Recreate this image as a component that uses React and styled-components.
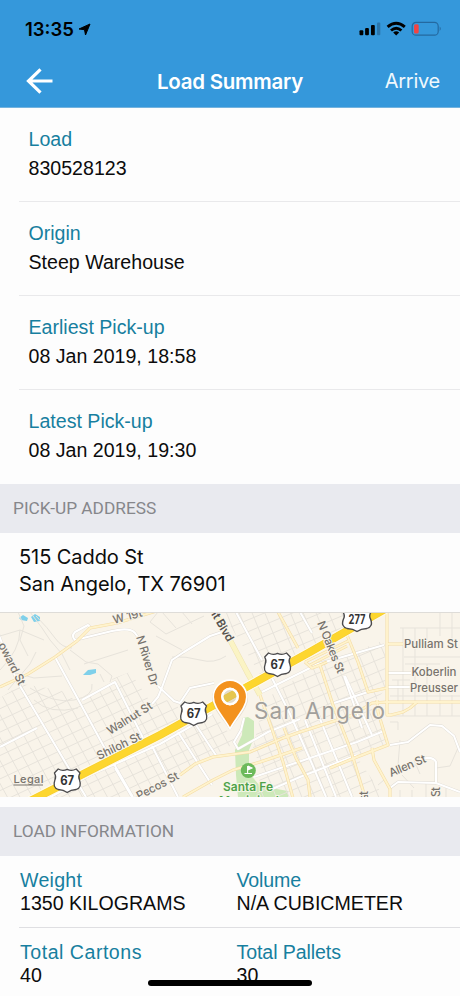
import React from "react";
import styled, { createGlobalStyle } from "styled-components";

const stops = [
  { label: "Load", value: "830528123" },
  { label: "Origin", value: "Steep Warehouse" },
  { label: "Earliest Pick-up", value: "08 Jan 2019, 18:58" },
  { label: "Latest Pick-up", value: "08 Jan 2019, 19:30" },
];

const loadInfo = [
  [
    { label: "Weight", value: "1350 KILOGRAMS", spacing: "0.25px" },
    { label: "Volume", value: "N/A CUBICMETER", spacing: "-0.15px" },
  ],
  [
    { label: "Total Cartons", value: "40", spacing: "0.5px" },
    { label: "Total Pallets", value: "30", spacing: "-0.1px" },
  ],
];

// parallel lines, count of them, each moved by (stepX, stepY)
const hatch = (x, y, dx, dy, stepX, stepY, count) =>
  Array.from(
    { length: count },
    (_, i) => `M${x + i * stepX} ${y + i * stepY}l${dx} ${dy}`
  ).join("");

const westGrid =
  hatch(-10, 690, 260, -122, 0, 11.7, 22) + hatch(-80, 660, 82, 150, 12.5, 0, 26);
const cityGrid =
  hatch(200, 640, 210, -88, 0, 11.8, 24) + hatch(170, 600, 86, 210, 12.8, 0, 20);

// small streets outside the regular blocks
const smallStreets = [
  "M18 612L24 626L20 640L28 656M30 612L42 628L50 640L62 654L70 670M0 636L20 630L44 640M8 690L30 664L36 652",
  "M36 616Q48 628 55 638T72 648M30 688Q54 704 74 700T92 684M70 650L86 662L98 664L112 676L110 682M84 664L128 650",
  "M34 700Q50 715 78 708M0 670Q20 650 20 630M12 672L34 678L62 676M100 674L104 682",
  "M172 657Q186 656 200 660T226 656M150 622L166 634L204 616M156 636L182 650M150 622L158 612M162 612L176 628M182 612L192 624",
  "M400 628H460M404 657H460M405 664H440M392 680H410M390 696H460M390 716H460M403 628V716M415 628V716M427 628V640M427 664V716M440 612V636M440 690V716M452 612V640M452 695V716M398 680V702",
  "M390 722H398V730M394 770L420 764M402 775L414 788M414 760L420 774M400 740L398 765M436 768L450 766L458 748",
  "M378 785L384 780M400 790V797M412 790V797M426 783V797M446 786V797",
];

const whiteRoads = [
  "M-4 628L17 681L67 765L86 797",
  "M55 657L103 745L133 797",
  "M82 700L115 682L143 738",
  "M0 747L37 728",
  "M90 627L88 625L75 632Q71 636 75 640L112 631Q130 627 135 633L140 640",
  "M152 704L158 697L161 690M158 686L174 701L180 703L190 688L214 683",
  "M161 690L172 660L184 652L210 636L222 632",
  "M40 803L90 775L122 761L160 744L212 714",
  "M115 768L132 797M152 746L178 797M178 732L212 785M196 725L217 757",
  "M236 612L262 660",
  "M272 678L290 714L312 764L326 797",
  "M262 692L318 664L384 645",
  "M345 676L372 735M334 703L368 692",
  "M254 777L310 758L357 742L384 731",
  "M270 790L300 777L357 755M305 720L336 797M318 714L352 797",
  "M300 612L312 633M344 676L362 728",
  "M387 673H411M387 687H410",
  "M390 745L408 742L430 725L442 726L454 736L460 752",
  "M390 788L398 782L436 783L460 792M436 783V762Q434 757 425 758",
  "M244 718L241 730L234 742L238 749L268 732L300 719",
];

const yellowRoads = [
  "M0 687L28 674L55 657L77 641L90 628L117 623L160 610",
  "M180 775L195 764L213 757L250 752L283 738L300 732L353 715L372 703L387 702H460",
  "M183 797L213 780L233 770L260 762L302 748",
  "M278 612L298 648M305 662L312 668L320 665L333 705L350 748L365 797",
  "M305 662L350 640M310 665L347 646M320 665L327 662",
  "M387 612V715H391L403 712L410 708L417 702M387 644H403",
  "M347 635L358 662L368 692L387 688",
  "M377 700L378 712L388 745L357 757L330 768",
  "M372 748L374 760L390 789V797",
  "M260 695L273 732L283 762L293 798",
  "M284 728L296 758L308 780L310 797",
];

const labels = [
  { text: "W 19t", x: 114, y: 624, angle: -15, size: 11.5, width: 30 },
  { text: "N River Dr", x: 136, y: 637, angle: 73, size: 11.5, width: 52 },
  { text: "oward St", x: -2, y: 645, angle: 63, size: 11.5, width: 46 },
  { text: "Walnut St", x: 110, y: 735, angle: -32, size: 11.5, width: 51 },
  { text: "Shiloh St", x: 99, y: 760, angle: -26, size: 11.5, width: 48 },
  { text: "Pecos St", x: 139, y: 800, angle: -28, size: 11.5, width: 46 },
  { text: "N Oakes St", x: 317, y: 623, angle: 68, size: 11.5, width: 55 },
  { text: "Pulliam St", x: 404, y: 647.5, angle: 0, size: 11.5, width: 54 },
  { text: "Koberlin", x: 411.5, y: 676, angle: 0, size: 11.5, width: 45 },
  { text: "Preusser", x: 410, y: 691.5, angle: 0, size: 11.5, width: 48 },
  { text: "Allen St", x: 391, y: 777, angle: -23, size: 11.5, width: 39 },
  { text: "St", x: 440, y: 797, angle: -90, size: 11.5, width: 10 },
  { text: "st", x: 368, y: 800, angle: -90, size: 11.5, width: 9 },
];

const shields = [
  { text: "67", x: 67.2, y: 780.5 },
  { text: "67", x: 193.7, y: 713.5 },
  { text: "67", x: 277.5, y: 664.5 },
  { text: "277", x: 357, y: 619.5, wide: true },
];

function Shield({ text, x, y, wide }) {
  return (
    <g transform={`translate(${x} ${y})`}>
      <path
        transform={wide ? "scale(1.1 1)" : undefined}
        d="M-9 -11.5Q-4.5 -9 0 -11.2Q4.5 -9 9 -11.5L12.8 -7.5Q10.6 -4 12.3 -0.5Q15 7 9 9Q3.5 9.3 0 12Q-3.5 9.3 -9 9Q-15 7 -12.3 -0.5Q-10.6 -4 -12.8 -7.5Z"
        fill="#fff"
        stroke="#4b4a4c"
        strokeWidth="1.3"
        strokeLinejoin="round"
      />
      <ShieldText
        y="4.5"
        textAnchor="middle"
        textLength={wide ? 17 : 14}
        lengthAdjust="spacingAndGlyphs"
      >
        {text}
      </ShieldText>
    </g>
  );
}

function PickupMap() {
  return (
    <MapSvg viewBox="0 612 460 185">
      <defs>
        <clipPath id="westBlocks">
          <path d="M0 698L22 684L60 690L78 702L116 681L146 735L35 797H0ZM45 797L160 742L214 714L236 742L213 757L180 775L140 797ZM112 679L130 672L152 704L160 697L178 706V726L146 738Z" />
        </clipPath>
        <clipPath id="cityBlocks">
          <path d="M222 612H380L310 650L262 678ZM264 700L312 668L385 640V690L376 700L388 745L357 757L384 797H256L262 764L252 752Z" />
        </clipPath>
      </defs>
      <rect y="612" width="460" height="185" fill="#f9f4ea" />
      <path
        d="M243 718L248 717L254 721L254 738L249 750L249 773L260 786L288 791V797H238L236 775L235 750L242 735Z"
        fill="#cde9b9"
      />
      <g fill="#7fd0ea">
        <path d="M19 618L23 615L28 618L27 621L21 620Z" />
        <path d="M31 617L35 614L40 617L40 621L34 622Z" />
        <path d="M83 675L88 670L96 669L96 673L90 675Z" />
      </g>
      <g fill="none" stroke="#e7e3db" strokeWidth="1">
        <path d={westGrid} clipPath="url(#westBlocks)" />
        <path d={cityGrid} clipPath="url(#cityBlocks)" />
        {smallStreets.map((d) => (
          <path key={d} d={d} />
        ))}
      </g>
      <g fill="none" strokeLinejoin="round">
        {whiteRoads.map((d) => (
          <path key={d} d={d} stroke="#dfdbd4" strokeWidth="2.9" />
        ))}
        {whiteRoads.map((d) => (
          <path key={d} d={d} stroke="#fff" strokeWidth="2.1" />
        ))}
        {yellowRoads.map((d) => (
          <path key={d} d={d} stroke="#f4dca4" strokeWidth="3" />
        ))}
        {yellowRoads.map((d) => (
          <path key={d} d={d} stroke="#fff3cd" strokeWidth="1.9" />
        ))}
        <path d="M212 606L247 672L260 695" stroke="#eee2b0" strokeWidth="5.6" />
        <path d="M212 606L247 672L260 695" stroke="#fbf4c4" strokeWidth="4.6" />
        <path d="M30 801L160 735L310 652L385 609" stroke="#fffbea" strokeWidth="10" />
        <path d="M30 801L160 735L310 652L385 609" stroke="#f6cc30" strokeWidth="7.8" />
        <path d="M30 801L160 735L310 652L385 609" stroke="#fdd62e" strokeWidth="6.6" />
      </g>
      {labels.map((l) => (
        <StreetText
          key={l.text}
          transform={`translate(${l.x} ${l.y}) rotate(${l.angle})`}
          fontSize={l.size}
          textLength={l.width}
        >
          {l.text}
        </StreetText>
      ))}
      <BlvdText transform="translate(211 614) rotate(60)" textLength="33">
        it Blvd
      </BlvdText>
      {shields.map((s) => (
        <Shield key={`${s.x}`} {...s} />
      ))}
      <CityText x="254" y="719" textLength="131">
        San Angelo
      </CityText>
      <circle cx="248.3" cy="770.5" r="7.5" fill="#6cba5b" />
      <path
        d="M247.6 766V773M247.8 766L252 768L247.8 770M244.5 773.5H252"
        fill="#fff"
        stroke="#fff"
        strokeWidth="1.1"
      />
      <ParkText x="223" y="791" textLength="50">
        Santa Fe
      </ParkText>
      <ParkText x="219" y="804.5" textLength="60">
        Municipal
      </ParkText>
      <path
        d="M230 731C225 720 212 710 212 698A18 18 0 0 1 248 698C248 710 235 720 230 731Z"
        fill="#b9a88c"
        opacity="0.35"
      />
      <path
        fillRule="evenodd"
        d="M230 729C225 718.5 213.2 708 213.2 697A16.8 16.8 0 0 1 246.800 697C246.800 708 235 718.5 230 729ZM230 688.5A8 8 0 1 0 230 704.5A8 8 0 1 0 230 688.5Z"
        fill="#f3921e"
        stroke="#fff"
        strokeWidth="1.7"
      />
      <circle cx="230" cy="696.5" r="7.7" fill="none" stroke="#fff" strokeWidth="2.4" />
      <LegalText x="13.5" y="783" textLength="30">
        Legal
      </LegalText>
      <path d="M13.5 785H43" stroke="#77736d" strokeWidth="1" />
      <path d="M0 612.5H460" stroke="#dedcd8" />
    </MapSvg>
  );
}

function StatusIcons() {
  return (
    <svg width="84" height="18" viewBox="0 0 84 18">
      <rect x="0.5" y="10.3" width="3.8" height="4.9" rx="1" />
      <rect x="6.1" y="8" width="3.8" height="7.2" rx="1" />
      <rect x="12" y="5" width="3.8" height="10.2" rx="1" />
      <rect x="18" y="2.5" width="3.3" height="12.7" rx="1" fill="#2c75aa" />
      <g fill="none" stroke="#000" strokeWidth="2.9">
        <path d="M28.6 6.9Q37.2 -0.5 45.8 6.9" />
        <path d="M32 10.5Q37.2 5.9 42.400 10.5" />
      </g>
      <path d="M34.2 12.4Q37.2 10 40.2 12.4L37.2 15.400Z" />
      <rect x="53.2" y="2.400" width="26" height="12.800" rx="3.8" fill="none" stroke="#2469a0" strokeWidth="1.2" />
      <rect x="55" y="4.2" width="4.700" height="9.2" rx="1.5" fill="#f04444" />
      <path d="M80.7 6.600Q82.8 8.800 80.7 11Z" fill="#2469a0" />
    </svg>
  );
}

const App = () => {
  return (
    <>
      <GlobalStyle />
      <Screen>
        <Header>
          <StatusBar>
            <Clock>
              13:35
              <svg width="13" height="13" viewBox="0 0 13 13">
                <path
                  d="M12 1L7.500 12L6.5 6.7L1 6Z"
                  stroke="#000"
                  strokeWidth="1"
                  strokeLinejoin="round"
                />
              </svg>
            </Clock>
            <StatusIcons />
          </StatusBar>
          <NavBar>
            <BackButton aria-label="Back">
              <svg width="28" height="28" viewBox="0 0 28 28">
                <path
                  d="M26.500 14H3M14.500 2.300L2.500 14L14.500 25.700"
                  fill="none"
                  stroke="#fff"
                  strokeWidth="3.2"
                />
              </svg>
            </BackButton>
            <Title>Load Summary</Title>
            <ArriveButton>Arrive</ArriveButton>
          </NavBar>
        </Header>

        {stops.map((item) => (
          <Row key={item.label}>
            <Label>{item.label}</Label>
            <Value>{item.value}</Value>
          </Row>
        ))}

        <SectionTitle>PICK-UP ADDRESS</SectionTitle>
        <Address>
          <div>515 Caddo St</div>
          <div>San Angelo, TX 76901</div>
        </Address>
        <PickupMap />

        <SectionTitle>LOAD INFORMATION</SectionTitle>
        {loadInfo.map((pair) => (
          <InfoRow key={pair[0].label}>
            {pair.map((item) => (
              <InfoCell key={item.label}>
                <Label $spacing={item.spacing}>{item.label}</Label>
                <Value>{item.value}</Value>
              </InfoCell>
            ))}
          </InfoRow>
        ))}
        <HomeIndicator />
      </Screen>
    </>
  );
};

const GlobalStyle = createGlobalStyle`
  * {
    box-sizing: border-box;
  }
  body {
    margin: 0;
    background: #fdfdfd;
  }
`;

const Screen = styled.div`
  position: relative;
  width: 460px;
  height: 996px;
  overflow: hidden;
  background: #fdfdfd;
  color: #0c0c0c;
  font-family: "Liberation Sans", Arial, sans-serif;
`;

const Header = styled.header`
  height: 108px;
  padding-top: 17px;
  background: #3598db;
  border-bottom: 1px solid #74b3de;
  font-family: Inter, sans-serif;
`;

const StatusBar = styled.div`
  display: flex;
  justify-content: space-between;
  align-items: center;
  height: 24px;
  padding: 0 17px 0 25px;
`;

const Clock = styled.div`
  display: flex;
  align-items: center;
  gap: 4px;
  color: #000;
  font-size: 18.5px;
  font-weight: 600;
`;

const NavBar = styled.nav`
  display: grid;
  grid-template-columns: 110px 1fr 110px;
  align-items: center;
  height: 80px;
  color: #fff;
`;

const BackButton = styled.button`
  display: flex;
  padding: 0 0 0 26px;
  border: none;
  background: none;
`;

const Title = styled.h1`
  margin: 0;
  text-align: center;
  font-size: 20.5px;
  font-weight: 600;
  letter-spacing: -0.25px;
  white-space: nowrap;
`;

const ArriveButton = styled.button`
  padding: 0 20px 0 0;
  border: none;
  background: none;
  color: #f0f8fd;
  text-align: right;
  font-family: inherit;
  font-size: 20px;
  letter-spacing: -0.25px;
`;

const Row = styled.div`
  height: 94px;
  margin-left: 19px;
  padding: 17px 0 0 9.5px;
  line-height: 29px;
  border-bottom: 1px solid #e9e9eb;

  &:nth-of-type(4) {
    border-bottom: none;
  }
`;

const Label = styled.div`
  color: #177f9f;
  font-size: 19.6px;
  letter-spacing: ${(props) => props.$spacing || "0"};
`;

const Value = styled.div`
  font-size: 19.6px;
`;

const SectionTitle = styled.h2`
  height: 49px;
  margin: 0;
  padding-left: 13px;
  background: #e9eaef;
  color: #86878b;
  font-family: Roboto, sans-serif;
  font-size: 17.3px;
  font-weight: 400;
  line-height: 49px;
`;

const Address = styled.div`
  height: 79px;
  padding: 11px 0 0 19px;
  font-family: Inter, sans-serif;
  font-size: 20px;
  line-height: 27px;
  letter-spacing: -0.07px;
`;

const MapSvg = styled.svg`
  display: block;
  width: 460px;
  height: 185px;
  margin-bottom: 10px;
  font-family: Inter, sans-serif;
`;

const StreetText = styled.text`
  fill: #77736d;
  font-weight: 500;
  stroke: #f9f4ea;
  stroke-width: 2px;
  paint-order: stroke;
`;

const BlvdText = styled(StreetText)`
  fill: #55524e;
  font-size: 11.5px;
  font-weight: 600;
`;

const CityText = styled.text`
  fill: #a19f9b;
  font-size: 22.5px;
  stroke: #f9f4ea;
  stroke-width: 1.5px;
  paint-order: stroke;
`;

const ParkText = styled.text`
  fill: #4fa24a;
  font-size: 12px;
  font-weight: 600;
  stroke: #f4f6e6;
  stroke-width: 2px;
  paint-order: stroke;
`;

const LegalText = styled.text`
  fill: #77736d;
  font-size: 11px;
  font-weight: 500;
`;

const ShieldText = styled.text`
  fill: #333;
  font-size: 12.5px;
  font-weight: 700;
`;

const InfoRow = styled.div`
  display: grid;
  grid-template-columns: 216.5px 1fr;
  height: 72px;
  margin-left: 19px;
  padding: 13px 0 0 1px;
  line-height: 23px;
  border-bottom: 1px solid #dfdfe2;
`;

const InfoCell = styled.div`
  white-space: nowrap;
`;

const HomeIndicator = styled.div`
  position: absolute;
  bottom: 10px;
  left: 148px;
  width: 164px;
  height: 6px;
  border-radius: 3px;
  background: #000;
`;

export default App;
